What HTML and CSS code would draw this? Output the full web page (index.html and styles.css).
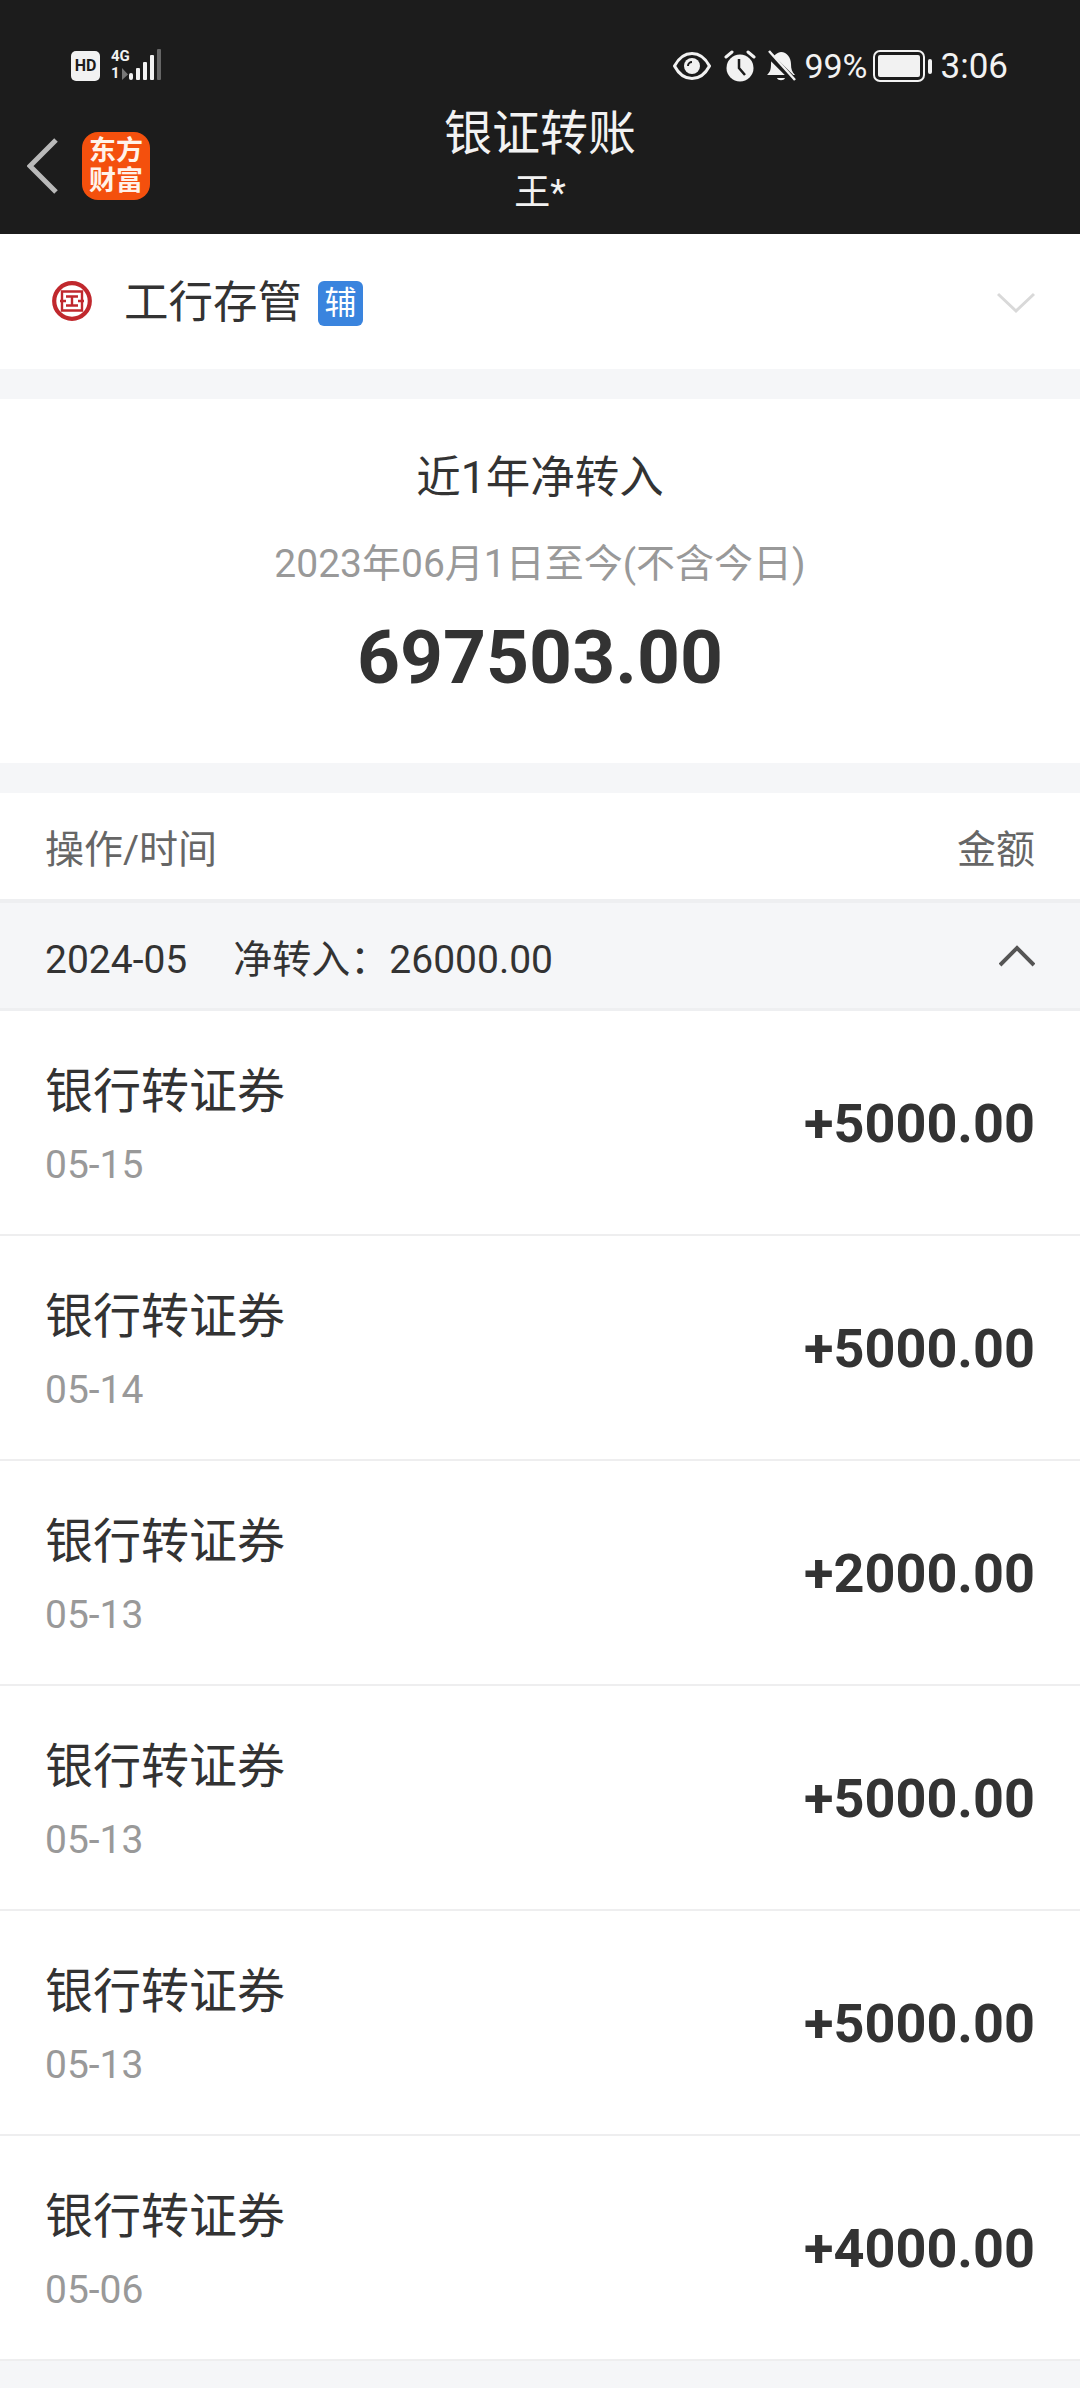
FILE: index.html
```html
<!DOCTYPE html>
<html lang="zh-CN">
<head>
<meta charset="utf-8">
<title>银证转账</title>
<link rel="stylesheet" href="styles.css">
</head>
<body>
<header class="top">
  <div class="status">
    <div class="status-left">
      <span class="hd">HD</span>
      <div class="signal">
        <div class="net-col">
          <span class="net">4G</span>
          <div class="net-row">
            <span class="net">1</span>
            <svg width="6" height="12" viewBox="0 0 6 12"><path d="M0 0v12l6-5.500z" fill="#777"/></svg>
          </div>
        </div>
        <svg width="34" height="32" viewBox="18 0 34 32">
          <rect x="18" y="24" width="4" height="7" rx="2" fill="#f2f2f2"/>
          <rect x="25" y="19" width="4" height="12" rx="1" fill="#f2f2f2"/>
          <rect x="32" y="13" width="4" height="18" rx="1" fill="#f2f2f2"/>
          <rect x="39" y="6" width="4" height="25" rx="1" fill="#f2f2f2"/>
          <rect x="46" y="0" width="4" height="31" rx="1" fill="#666"/>
        </svg>
      </div>
    </div>
    <div class="status-right">
      <svg class="eye" width="38" height="30" viewBox="0 0 38 30" fill="none">
        <path d="M1.500 15C6 6.500 12 2.500 19 2.500S32 6.500 36.500 15C32 23.500 26 27.500 19 27.500S6 23.500 1.500 15z" stroke="#f2f2f2" stroke-width="3"/>
        <circle cx="19" cy="15" r="8" fill="#f2f2f2"/>
        <path d="M15 15a4 4 0 0 1 4-4" stroke="#1c1c1c" stroke-width="2"/>
      </svg>
      <svg width="32" height="32" viewBox="0 0 32 32" fill="none">
        <circle cx="16" cy="18" r="13.500" fill="#f2f2f2"/>
        <path d="M15 9v9l6 7" stroke="#1c1c1c" stroke-width="2.500"/>
        <path d="M2 7l6-5M30 7l-6-5" stroke="#f2f2f2" stroke-width="3" stroke-linecap="round"/>
      </svg>
      <svg class="bell" width="30" height="32" viewBox="0 0 30 32" fill="none">
        <path d="M1 25c3-3 4-5 4-11C5 8 9 3 15 2c6 0 10 6 10 12 0 5 1 8 4 11z" fill="#f2f2f2"/>
        <path d="M11 28h8c-1 3-7 3-8 0z" fill="#f2f2f2"/>
        <path d="M2 4l27 27" stroke="#1c1c1c" stroke-width="6"/>
        <path d="M3 1l26 29" stroke="#f2f2f2" stroke-width="2.500"/>
      </svg>
      <span class="pct">99%</span>
      <svg class="battery" width="60" height="32" viewBox="0 0 60 32" fill="none">
        <rect x="1" y="1" width="50" height="30" rx="6" stroke="#f2f2f2" stroke-width="2"/>
        <rect x="5" y="5" width="42" height="22" rx="2" fill="#f2f2f2"/>
        <rect x="55" y="9" width="4" height="15" rx="2" fill="#f2f2f2"/>
      </svg>
      <span class="time">3:06</span>
    </div>
  </div>
  <div class="nav">
    <div class="nav-left">
      <svg width="32" height="56" viewBox="0 0 32 56" fill="none">
        <path d="M29 2L3 28l26 26" stroke="#b9b9b9" stroke-width="5"/>
      </svg>
      <span class="logo">东方<br>财富</span>
    </div>
    <div class="nav-title">
      <div class="title">银证转账</div>
      <div class="subtitle">王*</div>
    </div>
  </div>
</header>

<section class="bank">
  <svg class="bank-logo" width="40" height="40" viewBox="0 0 40 40" fill="none">
    <circle cx="20" cy="20" r="17.800" stroke="#c0282d" stroke-width="4.200"/>
    <path d="M10 19V10.500h20V19M10 21v8.500h20V21M8 20h6M26 20h6M14 15.500h12M20 15.500v9M14 24.500h12" stroke="#c0282d" stroke-width="2.400"/>
  </svg>
  <span class="bank-name">工行存管</span>
  <span class="badge">辅</span>
  <svg class="bank-chev" width="38" height="22" viewBox="0 0 38 22" fill="none">
    <path d="M1 2l18 17L37 2" stroke="#d9d9d9" stroke-width="3"/>
  </svg>
</section>

<section class="summary">
  <div class="sum-title">近1年净转入</div>
  <div class="sum-range">2023年06月1日至今(不含今日)</div>
  <div class="sum-value">697503.00</div>
</section>

<section class="list">
  <div class="list-head"><span>操作/时间</span><span>金额</span></div>
  <div class="group">
    <span class="group-text"><span class="group-date">2024-05</span>净转入：26000.00</span>
    <svg width="36" height="22" viewBox="0 0 36 22" fill="none">
      <path d="M1 20L18 3l17 17" stroke="#555" stroke-width="4"/>
    </svg>
  </div>
  <div class="row">
    <div class="row-main"><div class="row-title">银行转证券</div><div class="row-date">05-15</div></div>
    <div class="row-amount">+5000.00</div>
  </div>
  <div class="row">
    <div class="row-main"><div class="row-title">银行转证券</div><div class="row-date">05-14</div></div>
    <div class="row-amount">+5000.00</div>
  </div>
  <div class="row">
    <div class="row-main"><div class="row-title">银行转证券</div><div class="row-date">05-13</div></div>
    <div class="row-amount">+2000.00</div>
  </div>
  <div class="row">
    <div class="row-main"><div class="row-title">银行转证券</div><div class="row-date">05-13</div></div>
    <div class="row-amount">+5000.00</div>
  </div>
  <div class="row">
    <div class="row-main"><div class="row-title">银行转证券</div><div class="row-date">05-13</div></div>
    <div class="row-amount">+5000.00</div>
  </div>
  <div class="row">
    <div class="row-main"><div class="row-title">银行转证券</div><div class="row-date">05-06</div></div>
    <div class="row-amount">+4000.00</div>
  </div>
</section>
</body>
</html>
```
FILE: styles.css
```css
* { box-sizing: border-box; }
html, body { margin: 0; padding: 0; }
body {
  width: 1080px;
  height: 2388px;
  overflow: hidden;
  background: #f5f6f8;
  font-family: Roboto, "Noto Sans CJK SC", sans-serif;
  color: #333;
}
.top { height: 234px; background: #1c1c1c; color: #f2f2f2; display: flex; flex-direction: column; }
.status { height: 100px; padding: 34px 72px 0 71px; display: flex; justify-content: space-between; align-items: flex-start; }
.status-left { display: flex; align-items: flex-start; gap: 11px; padding-top: 17px; }
.hd { width: 29px; height: 30px; background: #f2f2f2; color: #1c1c1c; border-radius: 5px; font: 700 16px/30px Roboto, sans-serif; text-align: center; }
.signal { display: flex; margin-top: -2px; height: 32px; }
.net-col { width: 18px; display: flex; flex-direction: column; }
.net-row { display: flex; align-items: center; gap: 2px; margin-top: 2px; }
.net { font: 700 15px/15px Roboto, sans-serif; color: #f2f2f2; white-space: nowrap; }
.status-right { display: flex; align-items: center; height: 64px; }
.status-right svg { flex: none; margin-right: 10px; }
.status-right .eye { margin-right: 13px; }
.status-right .bell { margin-right: 8px; }
.status-right .battery { margin-right: 8px; }
.pct { font-size: 34px; margin-right: 5px; }
.time { font-size: 35px; }
.nav { flex: 1; display: grid; grid-template-columns: 1fr auto 1fr; }
.nav-left { display: flex; align-items: center; gap: 23px; padding: 0 0 2px 27px; height: 100%; }
.logo { width: 68px; height: 68px; background: #f4500d; border-radius: 16px; color: #fff3ea; font-size: 27px; line-height: 30px; font-weight: 700; text-align: center; padding-top: 4px; flex: none; }
.nav-title { text-align: center; padding-top: 1px; }
.title { font-size: 48px; line-height: 66px; }
.subtitle { font-size: 36px; line-height: 53px; }

.bank { height: 135px; background: #fff; display: flex; align-items: center; padding: 0 45px 0 52px; }
.bank-logo { flex: none; margin-bottom: 2px; }
.bank-name { font-size: 44.500px; margin: 3px 0 0 32px; line-height: 60px; }
.badge { width: 45px; height: 45px; margin: 3px 0 0 16px; background: #3a84de; color: #fff; border-radius: 6px; font-size: 32px; line-height: 44px; text-align: center; }
.bank-chev { margin: 3px 0 0 auto; }

.summary { margin-top: 30px; height: 364px; background: #fff; text-align: center; padding-top: 48px; }
.sum-title { font-size: 44.500px; line-height: 62px; }
.sum-range { font-size: 39px; line-height: 54px; color: #999; margin-top: 28px; }
.sum-value { font-size: 75px; line-height: 86px; font-weight: 700; margin-top: 23px; }

.list { margin-top: 30px; }
.list-head { height: 106px; background: #fff; display: flex; justify-content: space-between; align-items: center; padding: 0 45px; font-size: 39px; color: #666; }
.group { height: 112px; background: #f5f6f8; border-top: 4px solid #eeeff1; border-bottom: 3px solid #eeeff1; display: flex; justify-content: space-between; align-items: center; padding: 0 45px; font-size: 39px; }
.group-date { margin-right: 46px; }
.row { height: 225px; background: #fff; border-bottom: 2px solid #eeeeef; display: flex; justify-content: space-between; align-items: center; padding: 2px 45px 0; }
.row-main { padding-top: 2px; }
.row-title { font-size: 48px; line-height: 66px; }
.row-date { font-size: 39px; line-height: 50px; color: #999; margin-top: 15px; }
.row-amount { font-size: 54px; font-weight: 700; }
```
